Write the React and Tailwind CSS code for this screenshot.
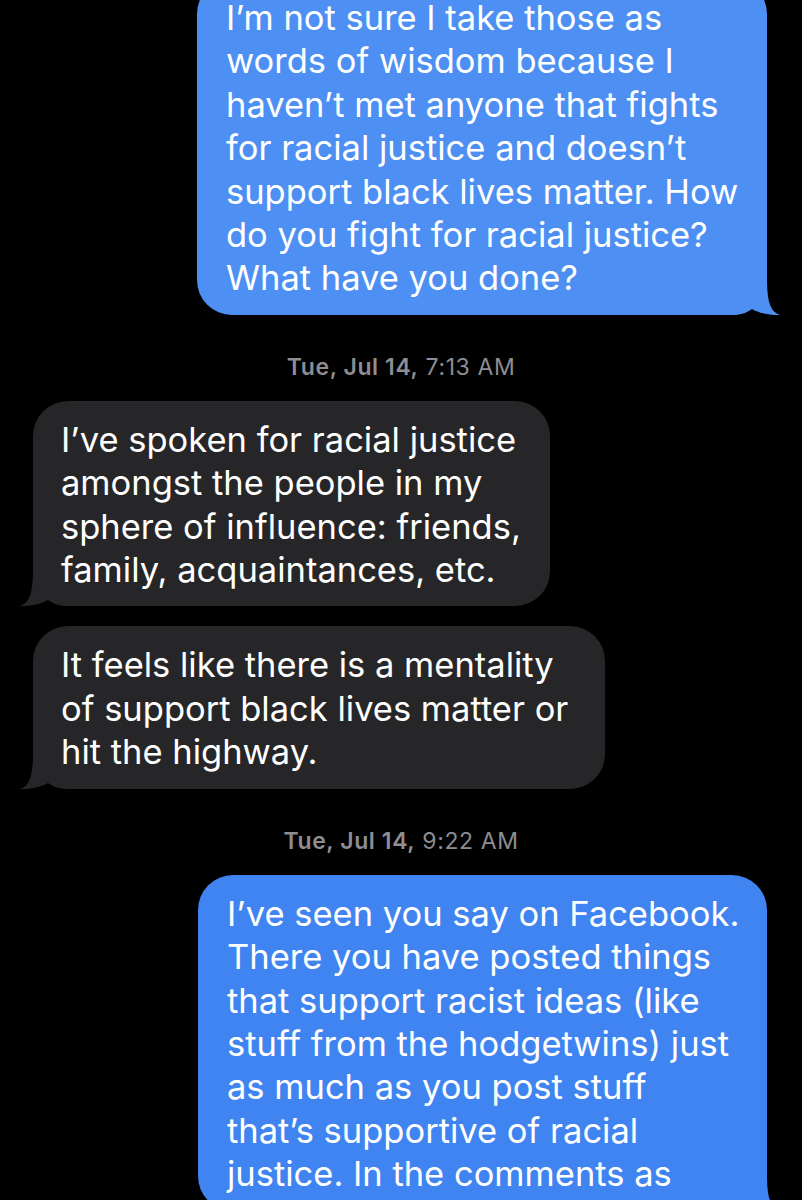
import React from "react";

const blueTop = "#4d8ff3";
const blueBottom = "#3f84f0";
const gray = "#262628";

function Tail({ side, color }) {
  if (side === "right") {
    return (
      <svg className="absolute bottom-0 right-[-13px]" width="49" height="36" viewBox="0 0 49 36">
        <path d="M0 0 H36 C36 24 40 33 49 36 C42 36.6 28 34.5 21 30 C15 34.5 8 36 0 36 Z" fill={color} />
      </svg>
    );
  }
  return (
    <svg className="absolute bottom-0 left-[-13px]" width="49" height="36" viewBox="0 0 49 36">
      <path d="M49 0 H13 C13 24 9 33 0 36 C7 36.6 21 34.5 28 30 C34 34.5 41 36 49 36 Z" fill={color} />
    </svg>
  );
}

function Bubble({ lines, mine, color, className }) {
  return (
    <div
      className={
        "relative rounded-[35px] pt-[17px] pb-[15px] text-white text-[34.5px] leading-[43.4px] " +
        (mine ? "ml-auto pl-[29px] pr-[20px] " : "pl-[28px] pr-[20px] ") +
        className
      }
      style={{ backgroundColor: color }}
    >
      <Tail side={mine ? "right" : "left"} color={color} />
      <div className="relative">
        {lines.map((l, i) => (
          <div key={i} className="whitespace-nowrap">{l}</div>
        ))}
      </div>
    </div>
  );
}

function Stamp({ day, time }) {
  return (
    <div className="text-center text-[23px] tracking-[0.6px] leading-[24px] text-[#8d8d92] mt-[40px] mb-[22px]">
      <span className="font-semibold">{day}</span> {time}
    </div>
  );
}

export default function App() {
  return (
    <div
      className="w-[802px] h-[1200px] bg-black overflow-hidden"
      style={{ fontFamily: "Inter, Roboto, 'Liberation Sans', sans-serif" }}
    >
      <Bubble
        mine
        color={blueTop}
        className="-mt-[21px] mr-[35px] w-[570px]"
        lines={[
          "I’m not sure I take those as",
          "words of wisdom because I",
          "haven’t met anyone that fights",
          "for racial justice and doesn’t",
          "support black lives matter. How",
          "do you fight for racial justice?",
          "What have you done?",
        ]}
      />

      <Stamp day="Tue, Jul 14," time="7:13 AM" />

      <div className="flex flex-col gap-[20px]">
        <Bubble
          color={gray}
          className="ml-[33px] w-[517px]"
          lines={[
            "I’ve spoken for racial justice",
            "amongst the people in my",
            "sphere of influence: friends,",
            "family, acquaintances, etc.",
          ]}
        />
        <Bubble
          color={gray}
          className="ml-[33px] w-[572px]"
          lines={[
            "It feels like there is a mentality",
            "of support black lives matter or",
            "hit the highway.",
          ]}
        />
      </div>

      <Stamp day="Tue, Jul 14," time="9:22 AM" />

      <Bubble
        mine
        color={blueBottom}
        className="mr-[35px] w-[569px]"
        lines={[
          "I’ve seen you say on Facebook.",
          "There you have posted things",
          "that support racist ideas (like",
          "stuff from the hodgetwins) just",
          "as much as you post stuff",
          "that’s supportive of racial",
          "justice. In the comments as",
          "",
        ]}
      />
    </div>
  );
}
